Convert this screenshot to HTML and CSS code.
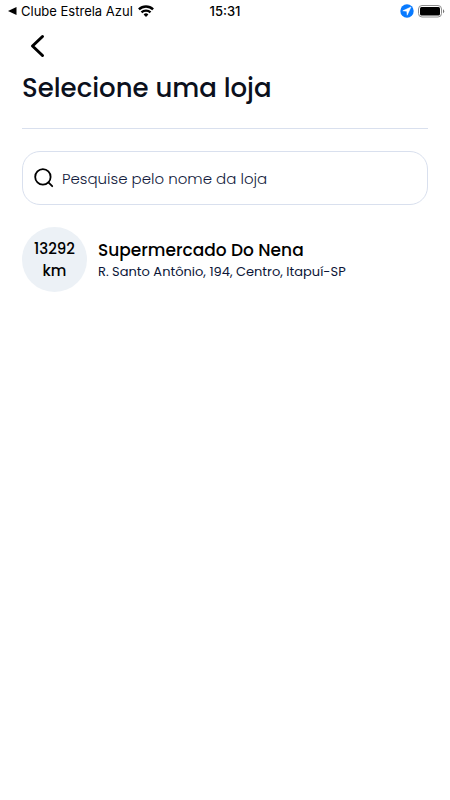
FILE: index.html
```html
<!DOCTYPE html>
<html lang="pt-BR">
<head>
<meta charset="utf-8">
<meta name="viewport" content="width=device-width, initial-scale=1">
<title>Selecione uma loja</title>
<link rel="stylesheet" href="styles.css">
</head>
<body>
<header class="status">
  <div class="status-left">
    <a class="return" href="#"><svg width="9" height="8" viewBox="0 0 9 8" aria-hidden="true"><path d="M0 4 8.5 0v8z"/></svg>Clube Estrela Azul</a>
    <svg width="16" height="12" viewBox="0 0 16 12" fill="none" stroke="#000" stroke-width="2.4" aria-hidden="true"><path d="M.9 4.4a10.2 10.2 0 0 1 14.2 0M3.5 7.4a6.5 6.5 0 0 1 9 0"/><path d="M8 11.9 5.6 9.5a3.4 3.4 0 0 1 4.8 0z" fill="#000" stroke="none"/></svg>
  </div>
  <time class="clock">15:31</time>
  <div class="status-right">
    <svg width="14" height="14" viewBox="0 0 14 14" aria-hidden="true"><circle cx="7" cy="7" r="6.7" fill="#087aff"/><path d="M11 3 2.8 6.8l4 .4.4 4z" fill="#fff" stroke="#fff" stroke-width=".5" stroke-linejoin="round"/></svg>
    <svg width="27" height="13" viewBox="0 0 27 13" aria-hidden="true"><rect x=".5" y=".5" width="23" height="11.5" rx="3.5" fill="none" stroke="#8e8e8e"/><rect x="2" y="2" width="20" height="8.5" rx="1.5"/><path d="M25 4.3q1.2.5 1.2 2T25 8.3z" fill="#777"/></svg>
  </div>
</header>
<main class="page">
  <button class="back" type="button" aria-label="Voltar"><svg width="16" height="24" viewBox="0 0 16 24" fill="none" stroke="#000" stroke-width="3" stroke-linecap="round" stroke-linejoin="round" aria-hidden="true"><path d="M12.5 2.5 2.5 12l10 9.5"/></svg></button>
  <h1 class="title">Selecione uma loja</h1>
  <label class="search">
    <svg width="20" height="20" viewBox="0 0 20 20" fill="none" stroke="#000" stroke-width="1.8" aria-hidden="true"><circle cx="8.9" cy="8.9" r="7.7"/><path d="m14.4 14.4 3.8 3.8" stroke-linecap="round"/></svg>
    <input type="search" placeholder="Pesquise pelo nome da loja" aria-label="Pesquise pelo nome da loja">
  </label>
  <a class="store" href="#">
    <span class="distance">13292 km</span>
    <span class="details">
      <strong class="name">Supermercado Do Nena</strong>
      <span class="address">R. Santo Antônio, 194, Centro, Itapuí-SP</span>
    </span>
  </a>
</main>
</body>
</html>
```
FILE: styles.css
```css
* {
  box-sizing: border-box;
}

body {
  margin: 0;
  background: #fff;
  color: #000;
  font-family: Poppins, Inter, sans-serif;
}

a {
  color: inherit;
  text-decoration: none;
}

svg {
  display: block;
  flex: none;
}

.status {
  display: grid;
  grid-template-columns: 1fr auto 1fr;
  align-items: center;
  height: 22px;
  padding: 0 5px;
  font-family: Inter, sans-serif;
  font-size: 13px;
}

.status-left,
.status-right,
.return {
  display: flex;
  align-items: center;
  gap: 5px;
}

.status-left {
  padding-left: 3px;
}

.return {
  gap: 4px;
  white-space: nowrap;
}

.status-right {
  justify-content: flex-end;
  gap: 4px;
}

.clock {
  font-weight: 500;
}

.page {
  padding: 12px 22px;
}

.back {
  display: block;
  margin-left: 8px;
  padding: 0;
  border: 0;
  background: none;
}

.title {
  margin: 0;
  padding: 10px 0 20px;
  border-bottom: 1px solid #d9e0ee;
  color: #0b101c;
  font-size: 26px;
  font-weight: 500;
  line-height: 40px;
}

.search {
  display: flex;
  align-items: center;
  gap: 8px;
  height: 54px;
  margin: 22px 0;
  padding: 0 11px;
  border: 1px solid #d9e0ee;
  border-radius: 18px;
}

.search input {
  flex: 1;
  min-width: 0;
  padding: 0;
  border: 0;
  outline: 0;
  background: none;
  font: inherit;
  font-size: 15px;
  font-weight: 300;
}

.search input::placeholder {
  color: #131b3d;
  opacity: 1;
}

.store {
  display: flex;
  align-items: center;
  gap: 11px;
}

.distance {
  display: grid;
  flex: none;
  place-items: center;
  width: 65px;
  height: 65px;
  padding: 0 8px;
  border-radius: 50%;
  background: #ecf1f6;
  font-size: 15px;
  font-weight: 500;
  line-height: 22px;
  text-align: center;
}

.details {
  display: grid;
}

.name {
  font-size: 17px;
  font-weight: 500;
  line-height: 24px;
}

.address {
  color: #0c1638;
  font-size: 13px;
  line-height: 20px;
}
```
